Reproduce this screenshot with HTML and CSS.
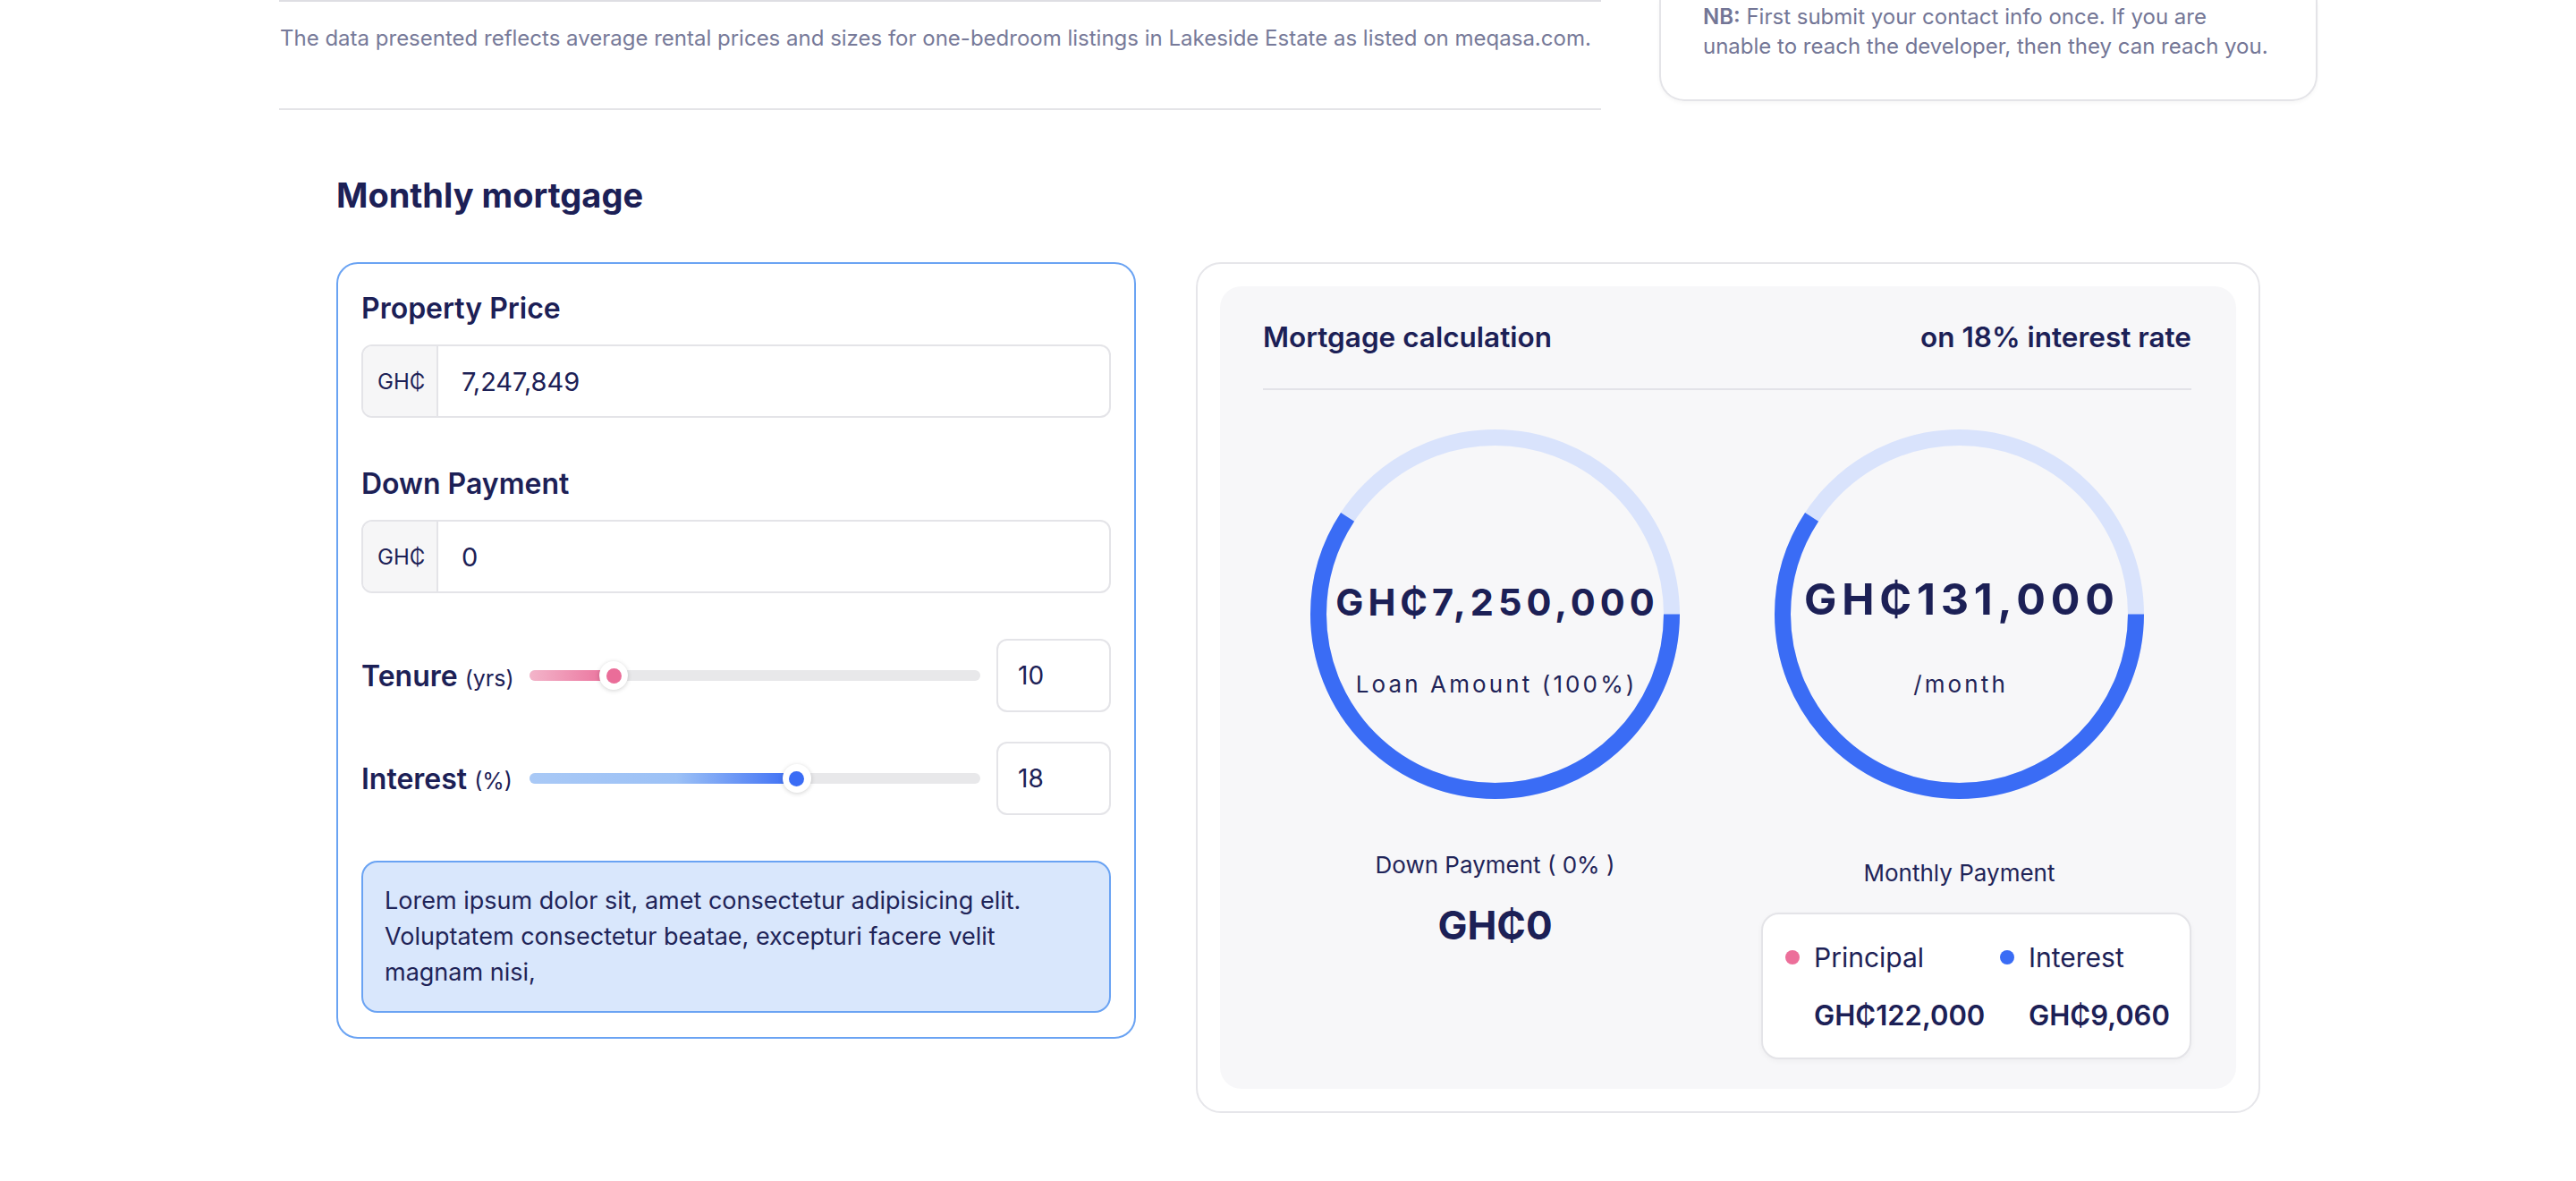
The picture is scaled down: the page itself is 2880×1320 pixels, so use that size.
FILE: index.html
```html
<!DOCTYPE html>
<html lang="en">
<head>
<meta charset="utf-8">
<title>Monthly mortgage</title>
<link rel="stylesheet" href="styles.css">
</head>
<body>
<div class="page">
  <section class="top">
    <div class="data-note">
      <p>The data presented reflects average rental prices and sizes for one-bedroom listings in Lakeside Estate as listed on meqasa.com.</p>
    </div>
    <aside class="contact-card">
      <p><strong>NB:</strong> First submit your contact info once. If you are unable to reach the developer, then they can reach you.</p>
    </aside>
  </section>

  <section class="mortgage">
    <h2 class="mortgage-title">Monthly mortgage</h2>
    <div class="mortgage-row">
      <div class="calc-form">
        <div class="field-label">Property Price</div>
        <div class="input-group">
          <span class="prefix">GH₵</span>
          <span class="value">7,247,849</span>
        </div>

        <div class="field-label field-label--spaced">Down Payment</div>
        <div class="input-group">
          <span class="prefix">GH₵</span>
          <span class="value">0</span>
        </div>

        <div class="slider-row slider-row--first">
          <div class="slider-label">Tenure <span class="unit">(yrs)</span></div>
          <div class="track">
            <div class="fill fill--pink" style="width: 18.7%"><span class="thumb thumb--pink"></span></div>
          </div>
          <div class="num-box">10</div>
        </div>

        <div class="slider-row slider-row--second">
          <div class="slider-label">Interest <span class="unit">(%)</span></div>
          <div class="track">
            <div class="fill fill--blue" style="width: 59.3%"><span class="thumb thumb--blue"></span></div>
          </div>
          <div class="num-box">18</div>
        </div>

        <div class="info-box">Lorem ipsum dolor sit, amet consectetur adipisicing elit. Voluptatem consectetur beatae, excepturi facere velit magnam nisi,</div>
      </div>

      <div class="result-card">
        <div class="result-panel">
          <div class="result-head">
            <span>Mortgage calculation</span>
            <span>on 18% interest rate</span>
          </div>
          <div class="result-cols">
            <div class="result-col">
              <div class="ring">
                <svg class="ring-svg" width="413" height="413" viewBox="0 0 413 413">
                  <circle cx="206.5" cy="206.5" r="197.5" fill="none" stroke="#d9e3fc" stroke-width="18"/>
                  <circle cx="206.5" cy="206.5" r="197.5" fill="none" stroke="#3a6cf5" stroke-width="18" stroke-dasharray="735.2 1240.9"/>
                </svg>
                <div class="ring-text ring-text--loan">
                  <div class="ring-amount ring-amount--loan">GH₵7,250,000</div>
                  <div class="ring-label">Loan Amount (100%)</div>
                </div>
              </div>
              <div class="below-label below-label--down">Down Payment ( 0% )</div>
              <div class="below-value">GH₵0</div>
            </div>
            <div class="result-col">
              <div class="ring">
                <svg class="ring-svg" width="413" height="413" viewBox="0 0 413 413">
                  <circle cx="206.5" cy="206.5" r="197.5" fill="none" stroke="#d9e3fc" stroke-width="18"/>
                  <circle cx="206.5" cy="206.5" r="197.5" fill="none" stroke="#3a6cf5" stroke-width="18" stroke-dasharray="735.2 1240.9"/>
                </svg>
                <div class="ring-text ring-text--month">
                  <div class="ring-amount ring-amount--month">GH₵131,000</div>
                  <div class="ring-label">/month</div>
                </div>
              </div>
              <div class="below-label below-label--monthly">Monthly Payment</div>
              <div class="legend">
                <div class="legend-name"><span class="dot dot--pink"></span>Principal</div>
                <div class="legend-name"><span class="dot dot--blue"></span>Interest</div>
                <div class="legend-value">GH₵122,000</div>
                <div class="legend-value">GH₵9,060</div>
              </div>
            </div>
          </div>
        </div>
      </div>
    </div>
  </section>
</div>
</body>
</html>
```

FILE: styles.css
```css
* {
  box-sizing: border-box;
  margin: 0;
  padding: 0;
}

body {
  background: #ffffff;
  font-family: Inter, "Noto Sans", "DejaVu Sans", sans-serif;
  color: #1d2156;
}

.page {
  width: 2279px;
  margin-left: 312px;
}

/* ---------- top strip ---------- */
.top {
  display: flex;
  align-items: flex-start;
  gap: 65px;
}

.data-note {
  width: 1478px;
  flex: none;
  border-top: 2px solid #dedee3;
  border-bottom: 2px solid #e4e4e7;
  padding: 23px 0 60px 1px;
}

.data-note p {
  font-size: 24px;
  line-height: 36px;
  color: #777a99;
}

.contact-card {
  width: 736px;
  flex: none;
  border: 2px solid #e4e4e8;
  border-top: none;
  border-radius: 0 0 28px 28px;
  padding: 2px 48px 43px 47px;
  box-shadow: 0 2px 4px rgba(0, 0, 0, 0.04);
}

.contact-card p {
  font-size: 24px;
  line-height: 33px;
  color: #737696;
}

.contact-card strong {
  font-weight: 600;
}

/* ---------- mortgage section ---------- */
.mortgage {
  padding: 72px 63px 0 64px;
}

.mortgage-title {
  font-size: 38px;
  line-height: 46px;
  font-weight: 700;
  color: #1c2056;
  margin-bottom: 52px;
}

.mortgage-row {
  display: flex;
  align-items: flex-start;
  gap: 67px;
}

/* ---------- left form card ---------- */
.calc-form {
  width: 894px;
  flex: none;
  border: 2px solid #6aa3f3;
  border-radius: 24px;
  padding: 30px 26px 27px 26px;
}

.field-label {
  font-size: 32px;
  line-height: 39px;
  font-weight: 600;
  color: #1c2056;
}

.field-label--spaced {
  margin-top: 54px;
}

.input-group {
  margin-top: 21px;
  height: 82px;
  display: flex;
  border: 2px solid #e4e4e8;
  border-radius: 12px;
  overflow: hidden;
}

.prefix {
  width: 84px;
  flex: none;
  display: flex;
  align-items: center;
  padding-left: 16px;
  background: #f6f6f7;
  border-right: 2px solid #e4e4e8;
  font-size: 24px;
  color: #1d2156;
}

.value {
  display: flex;
  align-items: center;
  padding-left: 26px;
  font-size: 29px;
  color: #1d2156;
}

.slider-row {
  display: flex;
  align-items: center;
  gap: 18px;
  height: 82px;
}

.slider-row--first {
  margin-top: 51px;
}

.slider-row--second {
  margin-top: 33px;
}

.slider-label {
  width: 170px;
  flex: none;
  font-size: 32px;
  font-weight: 600;
  color: #1c2056;
  white-space: nowrap;
}

.slider-label .unit {
  font-size: 25px;
  font-weight: 400;
}

.track {
  flex: 1;
  height: 12px;
  border-radius: 6px;
  background: #e8e8ea;
  position: relative;
}

.fill {
  height: 100%;
  border-radius: 6px;
  position: relative;
}

.fill--pink {
  background: linear-gradient(90deg, #f3b5ca 0%, #ea6d99 100%);
}

.fill--blue {
  background: linear-gradient(90deg, #a9c9f6 0%, #9cc1f6 55%, #3a6cf5 100%);
}

.thumb {
  position: absolute;
  right: -16px;
  top: -10px;
  width: 32px;
  height: 32px;
  border-radius: 50%;
  background: #ffffff;
  box-shadow: 0 1px 5px rgba(0, 0, 0, 0.18);
  display: flex;
  align-items: center;
  justify-content: center;
}

.thumb::after {
  content: "";
  width: 17px;
  height: 17px;
  border-radius: 50%;
}

.thumb--pink::after {
  background: #ea6d99;
}

.thumb--blue::after {
  background: #3a6cf5;
}

.num-box {
  width: 128px;
  height: 82px;
  flex: none;
  border: 2px solid #e4e4e8;
  border-radius: 12px;
  display: flex;
  align-items: center;
  padding-left: 22px;
  font-size: 28px;
  color: #1d2156;
}

.info-box {
  margin-top: 51px;
  background: #d9e7fc;
  border: 2px solid #6aa3f3;
  border-radius: 18px;
  padding: 23px 24px 23px 24px;
  font-size: 27px;
  line-height: 40px;
  color: #1f2458;
}

/* ---------- right result card ---------- */
.result-card {
  width: 1190px;
  flex: none;
  border: 2px solid #e6e6ea;
  border-radius: 28px;
  padding: 25px;
}

.result-panel {
  background: #f7f7f9;
  border-radius: 24px;
  padding: 38px 50px 33px 48px;
}

.result-head {
  display: flex;
  justify-content: space-between;
  font-size: 31.5px;
  line-height: 37px;
  font-weight: 600;
  color: #1c2056;
  padding-bottom: 39px;
  border-bottom: 2px solid #e3e3e8;
}

.result-cols {
  margin-top: 44px;
  display: grid;
  grid-template-columns: 1fr 1fr;
}

.result-col {
  display: flex;
  flex-direction: column;
  align-items: center;
}

.ring {
  width: 413px;
  height: 413px;
  display: grid;
}

.ring-svg,
.ring-text {
  grid-area: 1 / 1;
}

.ring-text {
  display: flex;
  flex-direction: column;
  align-items: center;
  text-align: center;
}

.ring-text--loan {
  padding-top: 168px;
}

.ring-text--month {
  padding-top: 162px;
}

.ring-amount {
  font-weight: 700;
  letter-spacing: 0.12em;
  padding-left: 0.12em;
  color: #1c2056;
  white-space: nowrap;
}

.ring-amount--loan {
  font-size: 41.5px;
  line-height: 50px;
}

.ring-amount--month {
  font-size: 48.5px;
  line-height: 56px;
}

.ring-label {
  margin-top: 51px;
  font-size: 26px;
  line-height: 32px;
  letter-spacing: 0.12em;
  padding-left: 0.12em;
  color: #1f2458;
}

.below-label {
  font-size: 26px;
  line-height: 32px;
  color: #1f2458;
}

.below-label--down {
  margin-top: 58px;
}

.below-label--monthly {
  margin-top: 67px;
}

.below-value {
  margin-top: 25px;
  font-size: 44px;
  line-height: 52px;
  font-weight: 700;
  color: #1c2056;
}

.legend {
  align-self: flex-end;
  margin-top: 28px;
  width: 481px;
  background: #ffffff;
  border: 2px solid #e4e4e8;
  border-radius: 20px;
  box-shadow: 0 2px 6px rgba(0, 0, 0, 0.04);
  padding: 30px 25px 28px 25px;
  display: grid;
  grid-template-columns: 240px auto;
  row-gap: 28px;
}

.legend-name {
  display: flex;
  align-items: center;
  gap: 16px;
  font-size: 30px;
  line-height: 36px;
  color: #1d2156;
}

.dot {
  width: 16px;
  height: 16px;
  border-radius: 50%;
  flex: none;
}

.dot--pink {
  background: #ec6f9a;
}

.dot--blue {
  background: #3a6cf5;
}

.legend-value {
  padding-left: 32px;
  font-size: 31px;
  line-height: 38px;
  font-weight: 600;
  color: #1c2056;
}
```
